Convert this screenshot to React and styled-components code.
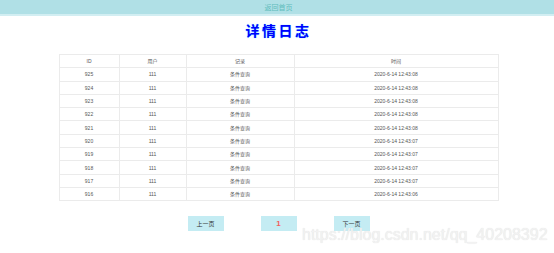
import React from 'react';
import styled, { createGlobalStyle } from 'styled-components';

const GlobalStyle = createGlobalStyle`
  body {
    margin: 0;
    background: #fff;
    font-family: "Liberation Sans", "Noto Sans CJK SC", sans-serif;
  }
`;

const Page = styled.div`
  position: relative;
  width: 554px;
  height: 253px;
  overflow: hidden;
`;

const TopBar = styled.div`
  height: 14px;
  background: #b0e0e6;
  border-bottom: 2px solid #d2eef2;
  display: flex;
  align-items: center;
  justify-content: center;
  padding-left: 3px;
`;

const HomeLink = styled.a`
  font-size: 7px;
  color: #5fbcbc;
  text-decoration: none;
`;

const Main = styled.div`
  padding-left: 3px;
  display: flex;
  flex-direction: column;
  align-items: center;
`;

const Title = styled.h1`
  margin: 6px 0 0;
  height: 30px;
  font-size: 14px;
  font-weight: bold;
  letter-spacing: 2.5px;
  color: #0000ff;
  text-shadow: 0 0 1px #33ccff;
  font-family: "Noto Sans CJK SC", sans-serif;
  line-height: 16px;
`;

const Table = styled.table`
  width: 435px;
  border-collapse: collapse;
  table-layout: fixed;
  margin-top: 2px;
`;

const Row = styled.tr`
  height: 13.3px;
`;

const Cell = styled.td`
  border: 1px solid #ebebeb;
  padding: 0;
  text-align: center;
  font-size: 5px;
  line-height: 6px;
  font-weight: normal;
  color: #555;
  width: ${(p) => p.w}px;
`;

const Pager = styled.div`
  display: flex;
  gap: 37px;
  margin-top: 15px;
`;

const PageButton = styled.button`
  width: 36px;
  height: 15px;
  border: none;
  padding: 0;
  background: #c4ecf3;
  font-size: ${(p) => (p.current ? '8px' : '6px')};
  font-family: "Liberation Sans", "Noto Sans CJK SC", sans-serif;
  color: ${(p) => (p.current ? '#f45c5c' : '#333')};
  font-weight: ${(p) => (p.current ? 'bold' : 'normal')};
`;

const Watermark = styled.div`
  position: absolute;
  left: 302px;
  top: 226px;
  font-size: 16px;
  color: #f2f2f2;
  text-shadow: 0 0 1px #dcdcdc;
  white-space: nowrap;
  pointer-events: none;
`;

const widths = [59, 66, 107, 203];

const logs = [
  [925, '2020-6-14 12:43:08'],
  [924, '2020-6-14 12:43:08'],
  [923, '2020-6-14 12:43:08'],
  [922, '2020-6-14 12:43:08'],
  [921, '2020-6-14 12:43:08'],
  [920, '2020-6-14 12:43:07'],
  [919, '2020-6-14 12:43:07'],
  [918, '2020-6-14 12:43:07'],
  [917, '2020-6-14 12:43:07'],
  [916, '2020-6-14 12:43:06'],
];

export default function App() {
  return (
    <Page>
      <GlobalStyle />
      <TopBar>
        <HomeLink href="#">返回首页</HomeLink>
      </TopBar>
      <Main>
        <Title>详情日志</Title>
        <Table>
          <thead>
            <Row>
              {['ID', '用户', '记录', '时间'].map((h, i) => (
                <Cell as="th" key={h} w={widths[i]}>
                  {h}
                </Cell>
              ))}
            </Row>
          </thead>
          <tbody>
            {logs.map(([id, time]) => (
              <Row key={id}>
                <Cell w={widths[0]}>{id}</Cell>
                <Cell w={widths[1]}>111</Cell>
                <Cell w={widths[2]}>条件查询</Cell>
                <Cell w={widths[3]}>{time}</Cell>
              </Row>
            ))}
          </tbody>
        </Table>
        <Pager>
          <PageButton>上一页</PageButton>
          <PageButton current>1</PageButton>
          <PageButton>下一页</PageButton>
        </Pager>
      </Main>
      <Watermark>https://blog.csdn.net/qq_40208392</Watermark>
    </Page>
  );
}
